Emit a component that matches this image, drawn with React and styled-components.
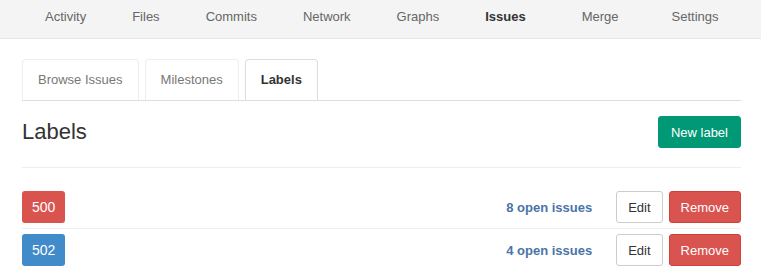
import React from "react";
import styled, { createGlobalStyle } from "styled-components";

const GlobalStyle = createGlobalStyle`
  body {
    margin: 0;
    background: #fff;
    font-family: "Liberation Sans", Arial, sans-serif;
    color: #333;
  }
`;

const TopNav = styled.ul`
  display: flex;
  margin: 0;
  padding: 0 0 0 22px;
  list-style: none;
  height: 38px;
  background: #f4f4f4;
  border-bottom: 1px solid #e5e5e5;
`;

const NavItem = styled.li`
  padding: 0 ${(p) => 23 + (p.$extra || 0)}px 0 23px;
  line-height: 34px;
  font-size: 13px;
  color: ${(p) => (p.$active ? "#333" : "#666")};
  font-weight: ${(p) => (p.$active ? "bold" : "normal")};
`;

const Page = styled.div`
  padding: 20px 20px 0 22px;
`;

const Tabs = styled.ul`
  display: flex;
  gap: 6px;
  margin: 0;
  padding: 0;
  list-style: none;
  border-bottom: 1px solid #ddd;
`;

const Tab = styled.li`
  padding: 0 15px;
  height: 40px;
  line-height: 40px;
  font-size: 13px;
  border: 1px solid ${(p) => (p.$active ? "#ddd" : "#eee")};
  border-bottom: none;
  border-radius: 4px 4px 0 0;
  margin-bottom: ${(p) => (p.$active ? "-1px" : "0")};
  background: #fff;
  color: ${(p) => (p.$active ? "#333" : "#777")};
  font-weight: ${(p) => (p.$active ? "bold" : "normal")};
`;

const Header = styled.div`
  display: flex;
  align-items: center;
  justify-content: space-between;
  padding: 15px 0 19px;
  border-bottom: 1px solid #eee;
`;

const Title = styled.h3`
  margin: 0;
  font-size: 22px;
  font-weight: normal;
  color: #333;
`;

const Button = styled.button`
  height: 32px;
  padding: 0 ${(p) => p.$pad || "11px"};
  font-family: inherit;
  font-size: 13px;
  border-radius: 3px;
  border: 1px solid ${(p) => p.$border};
  background: ${(p) => p.$bg};
  color: ${(p) => p.$color};
`;

const List = styled.ul`
  margin: 23px 0 0;
  padding: 0;
  list-style: none;
`;

const Row = styled.li`
  display: flex;
  align-items: center;
  padding: 0 0 5px;
  & + & {
    border-top: 1px solid #eee;
    padding-top: 5px;
  }
`;

const Badge = styled.span`
  display: inline-block;
  height: 32px;
  line-height: 32px;
  padding: 0 10px;
  border-radius: 3px;
  font-size: 14px;
  color: #fff;
  background: ${(p) => p.$color};
`;

const Count = styled.a`
  margin-left: auto;
  margin-right: 24px;
  font-size: 13px;
  font-weight: bold;
  color: #4a74a8;
  text-decoration: none;
`;

const Actions = styled.div`
  display: flex;
  gap: 6px;
`;

const labels = [
  { name: "500", color: "#d9534f", count: 8 },
  { name: "502", color: "#428bca", count: 4 },
];

const navItems = [
  { name: "Activity" },
  { name: "Files" },
  { name: "Commits" },
  { name: "Network" },
  { name: "Graphs" },
  { name: "Issues", extra: 10, active: true },
  { name: "Merge", extra: 7 },
  { name: "Settings" },
];

export default function App() {
  return (
    <>
      <GlobalStyle />
      <TopNav>
        {navItems.map((n) => (
          <NavItem key={n.name} $active={n.active} $extra={n.extra}>
            {n.name}
          </NavItem>
        ))}
      </TopNav>
      <Page>
        <Tabs>
          <Tab>Browse Issues</Tab>
          <Tab>Milestones</Tab>
          <Tab $active>Labels</Tab>
        </Tabs>
        <Header>
          <Title>Labels</Title>
          <Button $bg="#019875" $border="#019875" $color="#fff" $pad="12px">
            New label
          </Button>
        </Header>
        <List>
          {labels.map((l) => (
            <Row key={l.name}>
              <Badge $color={l.color}>{l.name}</Badge>
              <Count href="#">{l.count} open issues</Count>
              <Actions>
                <Button $bg="#fff" $border="#ccc" $color="#333">
                  Edit
                </Button>
                <Button $bg="#d9534f" $border="#d43f3a" $color="#fff">
                  Remove
                </Button>
              </Actions>
            </Row>
          ))}
        </List>
      </Page>
    </>
  );
}
